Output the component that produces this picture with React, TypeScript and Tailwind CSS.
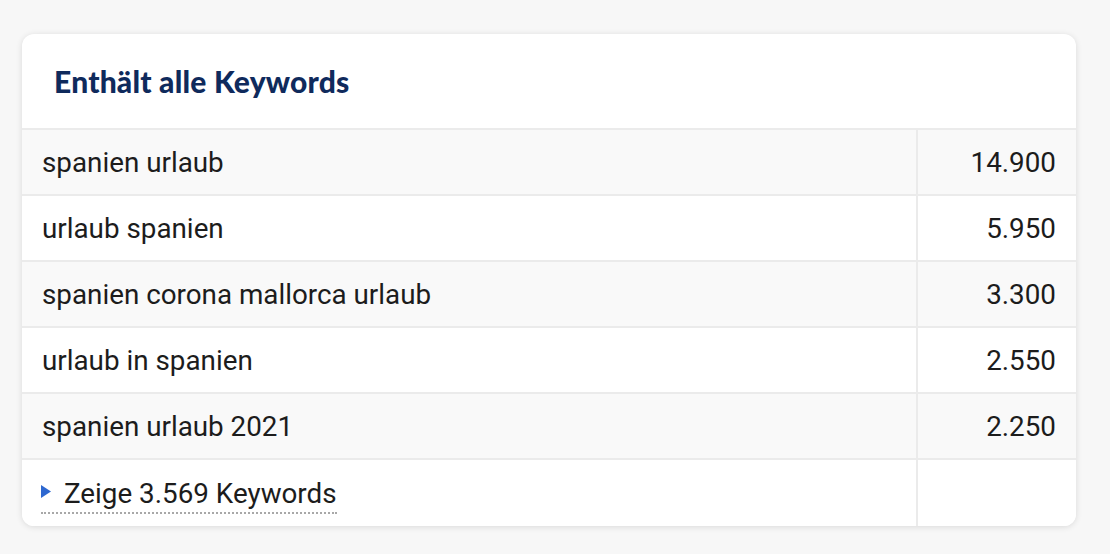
type Row = {
  keyword: string;
  volume: string;
};

const rows: Row[] = [
  { keyword: "spanien urlaub", volume: "14.900" },
  { keyword: "urlaub spanien", volume: "5.950" },
  { keyword: "spanien corona mallorca urlaub", volume: "3.300" },
  { keyword: "urlaub in spanien", volume: "2.550" },
  { keyword: "spanien urlaub 2021", volume: "2.250" }
];

const App = (): JSX.Element => {
  return (
    <div className="min-h-[554px] w-[1110px] bg-[#f7f7f7] pl-[22px] pt-[34px] font-['Roboto',sans-serif]">
      <div className="w-[1054px] overflow-hidden rounded-[12px] bg-white shadow-[0_1px_6px_rgba(0,0,0,0.12)]">
        <div className="flex h-[94px] items-center pl-[32px]">
          <h2 className="font-['Lato',sans-serif] text-[30px] font-black tracking-[0.2px] text-[#0f2a5c]">
            Enthält alle Keywords
          </h2>
        </div>
        {rows.map((row, i) => (
          <div
            key={row.keyword}
            className={`grid h-[66px] grid-cols-[896px_1fr] border-t-2 border-[#ebebeb] text-[27.8px] text-[#1c1c1c] ${
              i % 2 === 0 ? "bg-[#f9f9f9]" : "bg-white"
            }`}
          >
            <div className="flex items-center border-r-2 border-[#ebebeb] pl-[20px] pt-[2px]">{row.keyword}</div>
            <div className="flex items-center justify-end pr-[20px] pt-[2px]">{row.volume}</div>
          </div>
        ))}
        <div className="grid h-[68px] grid-cols-[896px_1fr] border-t-2 border-[#ebebeb] bg-white text-[27.8px] text-[#1c1c1c]">
          <div className="flex items-center border-r-2 border-[#ebebeb] pl-[19px]">
            <span className="mt-[6px] flex items-center gap-[13px] border-b-2 border-dotted border-[#a8a8a8] pb-[3px] leading-[30px]">
              <svg width="10" height="13" viewBox="0 0 10 13" className="mb-[4px]">
                <path d="M0 0 L10 6.5 L0 13 Z" fill="#2e68d0" />
              </svg>
              Zeige 3.569 Keywords
            </span>
          </div>
          <div />
        </div>
      </div>
    </div>
  );
};

export default App;
